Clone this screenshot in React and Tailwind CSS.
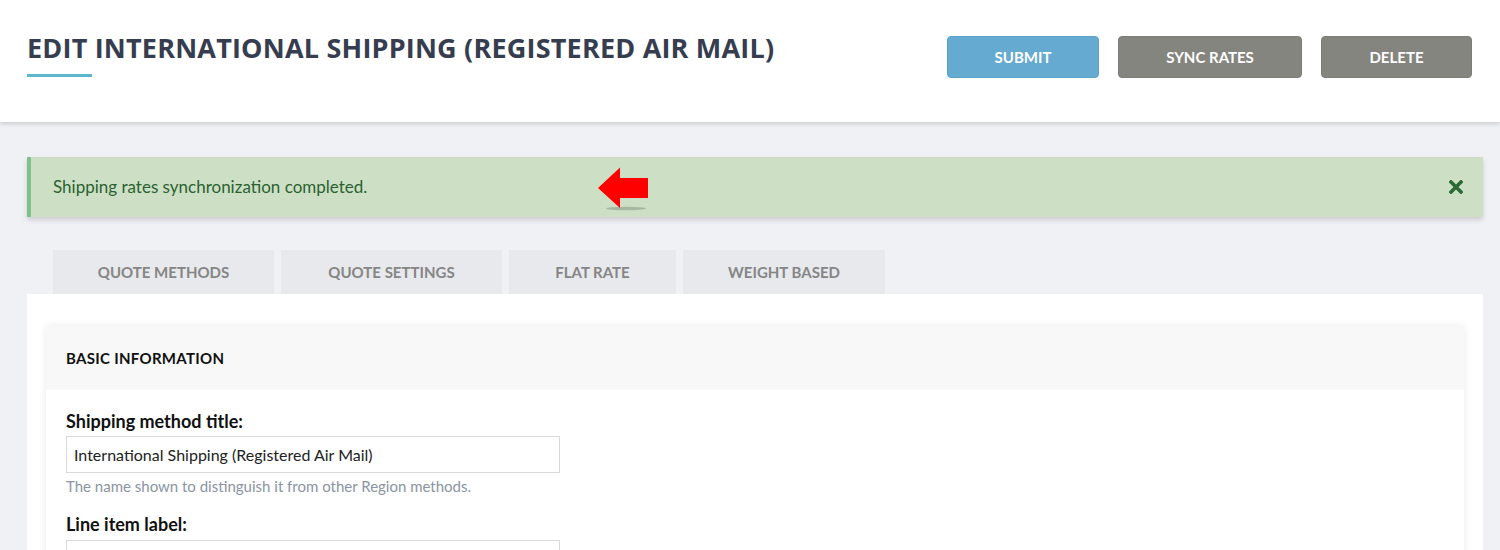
import React from "react";

const tabs = [
	{ label: "QUOTE METHODS", w: "w-[221px]" },
	{ label: "QUOTE SETTINGS", w: "w-[221px]" },
	{ label: "FLAT RATE", w: "w-[167px]" },
	{ label: "WEIGHT BASED", w: "w-[202px]" },
];

const App = () => {
	return (
		<div className="h-[550px] overflow-hidden bg-[#f0f1f5] font-['Lato','Liberation_Sans',sans-serif]">
			{/* header */}
			<div className="bg-white h-[122px] shadow-[0_2px_4px_rgba(0,0,0,0.15)] flex justify-between pl-[27px] pr-[28px] pt-[35px] relative">
				<div>
					<div className="text-[27px] leading-[26px] font-bold text-[#353d4f] tracking-[0.2px] font-['Open_Sans','Liberation_Sans',sans-serif]">
						EDIT INTERNATIONAL SHIPPING (REGISTERED AIR MAIL)
					</div>
					<div className="mt-[13px] w-[65px] h-[3px] bg-[#5bb8cc]"></div>
				</div>
				<div className="flex gap-[19px] h-[42px] mt-[1px]">
					<button className="w-[152px] rounded-[4px] bg-[#65aad0] border border-[#5aa2cc] text-white font-bold text-[15px]">SUBMIT</button>
					<button className="w-[184px] rounded-[4px] bg-[#858580] border border-[#7c7c78] text-white font-bold text-[15px]">SYNC RATES</button>
					<button className="w-[151px] rounded-[4px] bg-[#858580] border border-[#7c7c78] text-white font-bold text-[15px]">DELETE</button>
				</div>
			</div>

			<div className="pl-[27px] pr-[17px] pt-[35px]">
				{/* alert */}
				<div className="h-[60px] bg-[#cde0c5] border-l-4 border-[#80c185] shadow-[0_3px_5px_rgba(0,0,0,0.15)] flex items-center justify-between pl-[22px] pr-[20px] relative">
					<span className="text-[17px] text-[#2b6131]">Shipping rates synchronization completed.</span>
					<svg className="absolute left-[565px] top-[10px]" width="54" height="44" viewBox="0 0 54 44">
						<ellipse cx="30" cy="41.5" rx="20" ry="1.8" fill="rgba(0,0,0,0.18)" />
						<path d="M2 21 L24 0.5 L24 11 L52 11 L52 31 L24 31 L24 41 Z" fill="#ff0000" />
					</svg>
					<svg width="14" height="14" viewBox="0 0 14 14">
						<path d="M2 2 L12 12 M12 2 L2 12" stroke="#2d6a33" strokeWidth="3.6" strokeLinecap="square" />
					</svg>
				</div>

				{/* tabs */}
				<div className="flex gap-[7px] pl-[26px] mt-[33px]">
					{tabs.map((t, i) => (
						<div key={i} className={`${t.w} h-[44px] bg-[#e8e9ec] flex items-center justify-center text-[15px] font-bold text-[#858585]`}>
							{t.label}
						</div>
					))}
				</div>

				{/* panel */}
				<div className="bg-white px-[19px] pt-[32px] h-[260px]">
					<div className="shadow-[0_0_8px_rgba(0,0,0,0.08)] bg-white h-[300px]">
						<div className="h-[64px] bg-[#f8f8f8] flex items-center px-[20px] text-[15px] font-bold text-[#111] tracking-[0.3px]">
							BASIC INFORMATION
						</div>
						<div className="px-[20px] pt-[19px]">
							<div className="text-[18px] font-bold text-[#111] leading-[24px]">Shipping method title:</div>
							<div className="mt-[3px] w-[494px] h-[37px] border border-[#d9d9d9] flex items-center px-[7px] text-[16px] text-[#222]">
								International Shipping (Registered Air Mail)
							</div>
							<div className="mt-[3px] text-[15px] leading-[20px] text-[#8a94a2]">The name shown to distinguish it from other Region methods.</div>
							<div className="mt-[16px] text-[18px] font-bold text-[#111] leading-[24px]">Line item label:</div>
							<div className="mt-[4px] w-[494px] h-[37px] border border-[#d9d9d9]"></div>
						</div>
					</div>
				</div>
			</div>
		</div>
	);
};

export default App;
